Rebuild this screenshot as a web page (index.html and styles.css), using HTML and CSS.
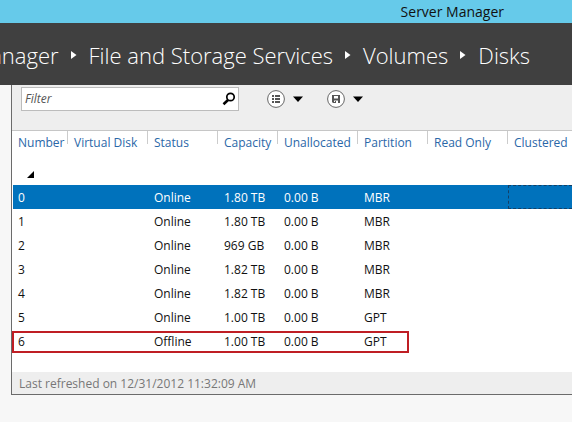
FILE: index.html
```html
<!DOCTYPE html>
<html lang="en">
<head>
<meta charset="utf-8">
<title>Server Manager</title>
<link rel="stylesheet" href="styles.css">
</head>
<body>
<header>
  <div class="titlebar">Server Manager</div>
  <nav class="crumbs">
    <a href="#">Manager</a>
    <svg width="6" height="8" viewBox="0 0 6 8"><path d="M0 0 5.500 4 0 8Z"/></svg>
    <a href="#">File and Storage Services</a>
    <svg width="6" height="8" viewBox="0 0 6 8"><path d="M0 0 5.500 4 0 8Z"/></svg>
    <a href="#">Volumes</a>
    <svg width="6" height="8" viewBox="0 0 6 8"><path d="M0 0 5.500 4 0 8Z"/></svg>
    <a href="#">Disks</a>
  </nav>
</header>
<main class="panel">
  <div class="toolbar">
    <div class="search">
      <input type="text" placeholder="Filter" aria-label="Filter">
      <button type="button" aria-label="Search">
        <svg width="14" height="14" viewBox="0 0 14 14" fill="none" stroke="#000"><circle cx="8.500" cy="5" r="3.700" stroke-width="1.700"/><path d="M6 8 1.500 12.200" stroke-width="2.600"/></svg>
      </button>
    </div>
    <button type="button" class="tool" aria-label="Saved views">
      <svg width="18" height="18" viewBox="0 0 18 18"><circle cx="9" cy="9" r="8.400" fill="#fff" stroke="#666"/><path fill="#555" d="M5 5h2v2H5zM8 5h5v2H8zM5 8h2v2H5zM8 8h5v2H8zM5 11h2v2H5zM8 11h5v2H8z"/></svg>
      <svg width="10" height="6" viewBox="0 0 10 6"><path d="M0 .5h10L5 6Z"/></svg>
    </button>
    <button type="button" class="tool" aria-label="Save view">
      <svg width="18" height="18" viewBox="0 0 18 18"><circle cx="9" cy="9" r="8.400" fill="#fff" stroke="#666"/><path fill="#555" fill-rule="evenodd" d="M5 5h8v8H6L5 12zM7 6v2.500h4V6zM7 10.500V12h1v-1h1v2h2v-2.500z"/></svg>
      <svg width="10" height="6" viewBox="0 0 10 6"><path d="M0 .5h10L5 6Z"/></svg>
    </button>
  </div>
  <table>
    <colgroup><col class="c-number"><col class="c-wide"><col class="c-mid"><col class="c-small"><col class="c-wide"><col class="c-mid"><col class="c-wide"><col></colgroup>
    <thead>
      <tr><th>Number</th><th>Virtual Disk</th><th>Status</th><th>Capacity</th><th>Unallocated</th><th>Partition</th><th>Read Only</th><th>Clustered</th></tr>
    </thead>
    <tbody>
      <tr class="group"><td colspan="8"><button type="button" aria-label="Collapse group"><svg width="7" height="7" viewBox="0 0 7 7"><path d="M7 0v7H0Z"/></svg></button></td></tr>
      <tr class="selected"><td>0</td><td></td><td>Online</td><td>1.80 TB</td><td>0.00 B</td><td>MBR</td><td></td><td class="focused"></td></tr>
      <tr><td>1</td><td></td><td>Online</td><td>1.80 TB</td><td>0.00 B</td><td>MBR</td><td></td><td></td></tr>
      <tr><td>2</td><td></td><td>Online</td><td>969 GB</td><td>0.00 B</td><td>MBR</td><td></td><td></td></tr>
      <tr><td>3</td><td></td><td>Online</td><td>1.82 TB</td><td>0.00 B</td><td>MBR</td><td></td><td></td></tr>
      <tr><td>4</td><td></td><td>Online</td><td>1.82 TB</td><td>0.00 B</td><td>MBR</td><td></td><td></td></tr>
      <tr><td>5</td><td></td><td>Online</td><td>1.00 TB</td><td>0.00 B</td><td>GPT</td><td></td><td></td></tr>
      <tr><td class="marked">6<span class="marker"></span></td><td></td><td>Offline</td><td>1.00 TB</td><td>0.00 B</td><td>GPT</td><td></td><td></td></tr>
    </tbody>
  </table>
  <footer>Last refreshed on 12/31/2012 11:32:09 AM</footer>
</main>
</body>
</html>
```
FILE: styles.css
```css
* { box-sizing: border-box; }
body {
  margin: 0;
  background: #f7f7f7;
  color: #111;
  font: 12px/22px "Open Sans", "Noto Sans", sans-serif;
  overflow-x: hidden;
}
button { border: 0; padding: 0; background: none; }
svg { display: block; flex: none; }
.titlebar {
  height: 23px;
  padding-right: 68px;
  background: #66caea;
  font: 14px/23px "Open Sans", sans-serif;
  text-align: right;
}
.crumbs {
  display: flex;
  justify-content: flex-end;
  align-items: center;
  gap: 12px;
  height: 62px;
  padding: 2px 42px 0 0;
  overflow: hidden;
  background: #404040;
  font: 300 22px/32px "Open Sans", sans-serif;
  white-space: nowrap;
}
.crumbs a { color: #fff; text-decoration: none; }
.crumbs svg { fill: #fff; }
.panel {
  margin-left: 11px;
  border-left: 1px solid #6b6b6b;
  border-bottom: 1px solid #6b6b6b;
  background: #fff;
  box-shadow: 0 2px 0 #dcdcdc;
}
.toolbar {
  display: flex;
  align-items: flex-start;
  height: 46px;
  padding: 2px 0 0 9px;
  background: #eee;
  border-bottom: 1px solid #c6c6c6;
}
.search {
  display: flex;
  align-items: center;
  width: 218px;
  height: 24px;
  padding-right: 2px;
  margin-right: 10px;
  border: 1px solid #bcbcbc;
  background: #fff;
}
.search input {
  flex: 1;
  min-width: 0;
  padding: 0 3px;
  border: 0;
  background: none;
  outline: 0;
  font: italic 12px/20px "Open Sans", sans-serif;
}
.search input::placeholder { color: #555; opacity: 1; }
.tool {
  display: flex;
  align-items: center;
  gap: 8px;
  height: 24px;
  margin-left: 18px;
}
.tool + .tool { margin-left: 24px; }
table {
  width: 100%;
  table-layout: fixed;
  border-collapse: separate;
  border-spacing: 0;
}
.c-number { width: 56px; }
.c-small { width: 60px; }
.c-mid { width: 70px; }
.c-wide { width: 80px; }
th, td {
  height: 24px;
  padding: 2px 0 0 6px;
  text-align: left;
  white-space: nowrap;
}
th {
  height: 30px;
  padding: 0 0 6px 6px;
  color: #2a67a8;
  font-weight: 400;
  background: linear-gradient(#ccc, #ccc) right top / 1px 13px no-repeat;
}
th:last-child { background: none; }
.group button { display: block; margin-left: 9px; }
.selected td { background: #0072bc; color: #fff; }
.selected td:first-child { border-left: 1px solid #fff; padding-left: 5px; }
.selected .focused { border: 1px dashed #123f66; border-right: 0; }
.marked { position: relative; }
.marker {
  position: absolute;
  top: 2px;
  left: 0;
  width: 397px;
  height: 22px;
  border: 2px solid #bf1e24;
}
footer {
  height: 22px;
  margin-top: 19px;
  padding-left: 7px;
  background: #eee;
  color: #777;
  line-height: 24px;
}
```
